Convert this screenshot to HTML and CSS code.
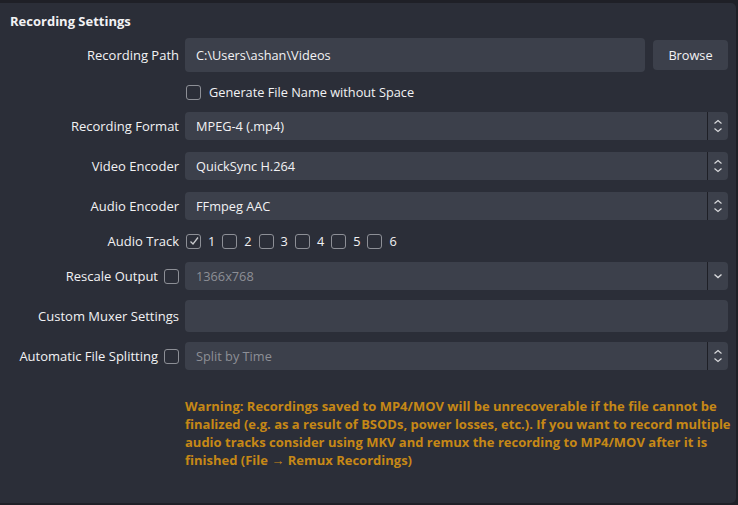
FILE: index.html
```html
<!DOCTYPE html>
<html>
<head>
<meta charset="utf-8">
<link rel="stylesheet" href="styles.css">
</head>
<body>
<div class="panel">
  <div class="title">Recording Settings</div>
  <div class="form">
    <div class="row r-path">
      <div class="label">Recording Path</div>
      <div class="field-line">
        <div class="input grow">C:\Users\ashan\Videos</div>
        <div class="button">Browse</div>
      </div>
    </div>
    <div class="row r-check">
      <div class="label"></div>
      <div class="check-line"><span class="box"></span><span>Generate File Name without Space</span></div>
    </div>
    <div class="row r-sel">
      <div class="label">Recording Format</div>
      <div class="select"><span class="val">MPEG-4 (.mp4)</span><span class="spin"><svg width="10" height="14" viewBox="0 0 10 14"><path d="M1.5 4.5 L5 1.5 L8.5 4.5 M1.5 9.5 L5 12.5 L8.5 9.5" fill="none" stroke="#d8d9dc" stroke-width="1.2"/></svg></span></div>
    </div>
    <div class="row r-sel">
      <div class="label">Video Encoder</div>
      <div class="select"><span class="val">QuickSync H.264</span><span class="spin"><svg width="10" height="14" viewBox="0 0 10 14"><path d="M1.5 4.5 L5 1.5 L8.5 4.5 M1.5 9.5 L5 12.5 L8.5 9.5" fill="none" stroke="#d8d9dc" stroke-width="1.2"/></svg></span></div>
    </div>
    <div class="row r-sel">
      <div class="label">Audio Encoder</div>
      <div class="select"><span class="val">FFmpeg AAC</span><span class="spin"><svg width="10" height="14" viewBox="0 0 10 14"><path d="M1.5 4.5 L5 1.5 L8.5 4.5 M1.5 9.5 L5 12.5 L8.5 9.5" fill="none" stroke="#d8d9dc" stroke-width="1.2"/></svg></span></div>
    </div>
    <div class="row r-track">
      <div class="label">Audio Track</div>
      <div class="tracks">
        <span class="track"><span class="box checked"><svg width="12" height="12" viewBox="0 0 12 12"><path d="M2.5 6.5 L5 9 L10 2.5" fill="none" stroke="#c8c9cc" stroke-width="1.3"/></svg></span>1</span>
        <span class="track"><span class="box"></span>2</span>
        <span class="track"><span class="box"></span>3</span>
        <span class="track"><span class="box"></span>4</span>
        <span class="track"><span class="box"></span>5</span>
        <span class="track"><span class="box"></span>6</span>
      </div>
    </div>
    <div class="row r-sel">
      <div class="label">Rescale Output <span class="box"></span></div>
      <div class="select disabled"><span class="val">1366x768</span><span class="spin"><svg width="10" height="8" viewBox="0 0 10 8"><path d="M1.5 2.5 L5 5.5 L8.5 2.5" fill="none" stroke="#d8d9dc" stroke-width="1.4"/></svg></span></div>
    </div>
    <div class="row r-mux">
      <div class="label">Custom Muxer Settings</div>
      <div class="input"></div>
    </div>
    <div class="row r-sel r-split">
      <div class="label">Automatic File Splitting <span class="box"></span></div>
      <div class="select disabled"><span class="val">Split by Time</span><span class="spin"><svg width="10" height="14" viewBox="0 0 10 14"><path d="M1.5 4.5 L5 1.5 L8.5 4.5 M1.5 9.5 L5 12.5 L8.5 9.5" fill="none" stroke="#d8d9dc" stroke-width="1.2"/></svg></span></div>
    </div>
    <div class="row r-warn">
      <div class="label"></div>
      <div class="warning">Warning: Recordings saved to MP4/MOV will be unrecoverable if the file cannot be finalized (e.g. as a result of BSODs, power losses, etc.). If you want to record multiple audio tracks consider using MKV and remux the recording to MP4/MOV after it is finished (File → Remux Recordings)</div>
    </div>
  </div>
</div>
</body>
</html>
```

FILE: styles.css
```css
html, body {
  margin: 0;
  padding: 0;
  background: #1f2027;
}
body {
  width: 738px;
  height: 505px;
  overflow: hidden;
  font-family: "Open Sans", "Noto Sans", sans-serif;
  font-size: 12.75px;
  color: #f2f2f4;
}
.panel {
  margin-top: 3px;
  width: 736px;
  height: 500px;
  background: #2b2e38;
  border-radius: 0 5px 5px 0;
  box-sizing: border-box;
  padding-right: 8px;
}
.title {
  font-weight: 700;
  font-size: 13px;
  padding: 9px 0 0 10px;
  height: 26px;
  line-height: 18px;
  box-sizing: border-box;
}
.form {
  display: flex;
  flex-direction: column;
}
.row {
  display: grid;
  grid-template-columns: 179px 1fr;
  column-gap: 6px;
  align-items: center;
}
.label {
  text-align: right;
  display: flex;
  justify-content: flex-end;
  align-items: center;
  gap: 6px;
  white-space: nowrap;
  font-size: 13px;
}
.r-path { margin-top: 9px; height: 34px; }
.r-check { margin-top: 11px; height: 16px; }
.r-sel { margin-top: 12px; height: 28px; }
.r-check + .r-sel { margin-top: 13px; }
.r-track { margin-top: 12px; height: 18px; }
.r-mux { margin-top: 10px; height: 32px; }
.r-split { margin-top: 10px; }
.r-warn { margin-top: 27px; align-items: start; }

.field-line {
  display: flex;
  align-items: center;
  gap: 8px;
  height: 34px;
}
.input {
  background: #3c404b;
  border-radius: 4px;
  height: 100%;
  display: flex;
  align-items: center;
  padding: 0 11px;
  box-sizing: border-box;
}
.grow { flex: 1; }
.button {
  width: 75px;
  height: 30px;
  background: #3c404b;
  border-radius: 4px;
  display: flex;
  align-items: center;
  justify-content: center;
}
.check-line {
  display: flex;
  align-items: center;
  gap: 8px;
  padding-left: 1px;
}
.box {
  width: 13px;
  height: 13px;
  border: 1.5px solid #8d8f96;
  border-radius: 3px;
  display: inline-flex;
  align-items: center;
  justify-content: center;
  flex: none;
}
.select {
  background: #3c404b;
  border-radius: 4px;
  height: 28px;
  display: flex;
  align-items: center;
}
.select .val {
  flex: 1;
  padding-left: 11px;
}
.select.disabled .val { color: #8d8f96; }
.spin {
  width: 20px;
  height: 100%;
  border-left: 1px solid #1e1f26;
  display: flex;
  align-items: center;
  justify-content: center;
}
.tracks {
  display: flex;
  align-items: center;
  gap: 7px;
  padding-left: 1px;
}
.track {
  display: inline-flex;
  align-items: center;
  gap: 7px;
}
.warning {
  color: #c68816;
  font-weight: 700;
  font-size: 13px;
  line-height: 18px;
  margin-right: -6px;
}
```
